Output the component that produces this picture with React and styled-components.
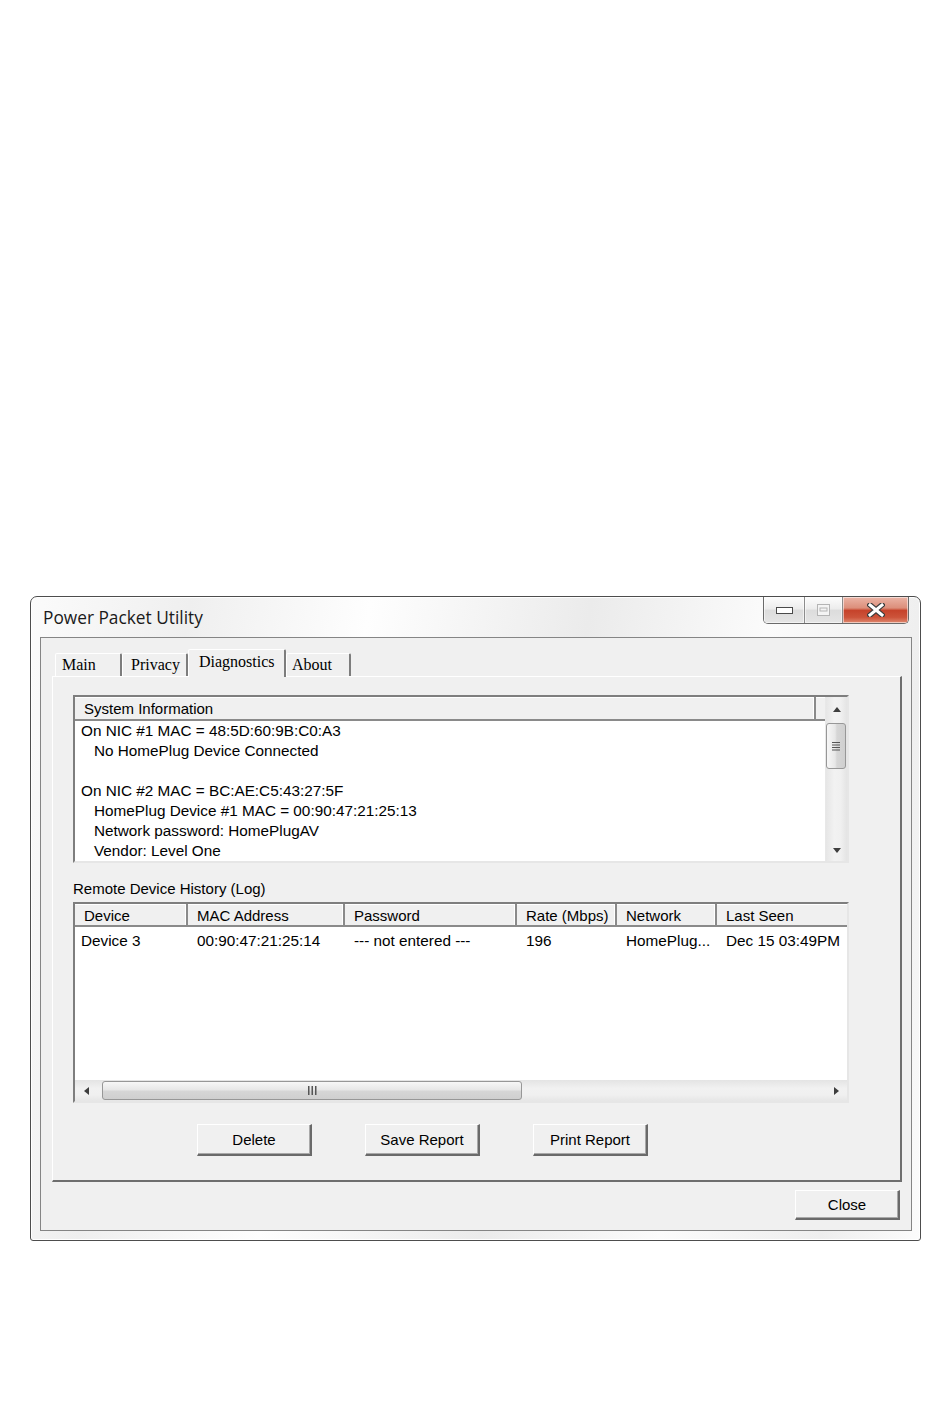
import React from 'react'
import styled, { createGlobalStyle } from 'styled-components'

const GlobalStyle = createGlobalStyle`
  html, body {
    margin: 0;
    padding: 0;
    background: #ffffff;
  }
  body {
    font-family: "Liberation Sans", Arial, sans-serif;
    color: #000;
  }
`

const Page = styled.div`
  width: 950px;
  height: 1419px;
  box-sizing: border-box;
  padding: 596px 0 0 30px;
`

const Window = styled.div`
  width: 891px;
  height: 645px;
  box-sizing: border-box;
  display: flex;
  flex-direction: column;
  padding: 0 8px 9px 9px;
  border: 1px solid #4d4d4d;
  border-radius: 7px 7px 3px 3px;
  background: linear-gradient(100deg, #fbfbfb 0%, #efefef 16%, #fefefe 34%, #ebebeb 56%, #fbfbfb 74%, #eeeeee 90%, #fcfcfc 100%);
  box-shadow: inset 0 0 0 1px rgba(255, 255, 255, 0.95);
`

const TitleBar = styled.div`
  height: 40px;
  display: flex;
  align-items: flex-start;
`

const Title = styled.div`
  margin: 11px 0 0 3px;
  font-family: "Open Sans", "Liberation Sans", sans-serif;
  font-size: 17.3px;
  line-height: 20px;
  color: #1a1a1a;
`

const Caption = styled.div`
  margin-left: auto;
  margin-right: 3px;
  height: 27px;
  display: flex;
  border: 1px solid #6a6a6a;
  border-top: none;
  border-radius: 0 0 5px 5px;
  overflow: hidden;
  box-sizing: border-box;
`

const CaptionButton = styled.div`
  width: ${p => p.$w}px;
  display: flex;
  align-items: center;
  justify-content: center;
  box-sizing: border-box;
  border-left: ${p => (p.$first ? 'none' : '1px solid #8c8c8c')};
  background: ${p =>
    p.$close
      ? 'linear-gradient(#ebb4a6 0%, #dc8f7b 42%, #c6432b 52%, #cc533a 78%, #e08a70 100%)'
      : 'linear-gradient(#fdfdfd 0%, #ececec 45%, #dcdcdc 52%, #e5e5e5 100%)'};
  box-shadow: inset 0 0 0 1px rgba(255, 255, 255, 0.55);
`

const Client = styled.div`
  flex: 1;
  display: flex;
  flex-direction: column;
  box-sizing: border-box;
  padding: 11px 9px 9px 11px;
  background: #f0f0f0;
  border: 1px solid #858585;
`

const TabRow = styled.div`
  height: 27px;
  display: flex;
  align-items: flex-end;
  padding-left: 3px;
  position: relative;
  z-index: 1;
`

const Tab = styled.div`
  width: ${p => p.$w}px;
  height: ${p => (p.$active ? 28 : 23)}px;
  margin-bottom: ${p => (p.$active ? -1 : 0)}px;
  box-sizing: border-box;
  padding: ${p => (p.$active ? 1 : 0)}px 0 0 ${p => p.$pad}px;
  border-style: solid;
  border-width: 1px 2px 0 1px;
  border-color: #ffffff #7d7d7d transparent #ffffff;
  border-radius: 2px 2px 0 0;
  background: #f0f0f0;
  font-family: "Liberation Serif", "Times New Roman", serif;
  font-size: 16px;
  line-height: 22px;
  color: #000;
`

const Panel = styled.div`
  height: 506px;
  box-sizing: border-box;
  padding: 18px 0 0 20px;
  border-style: solid;
  border-width: 1px 2px 2px 1px;
  border-color: #ffffff #6e6e6e #6e6e6e #ffffff;
  background: #f0f0f0;
`

const SunkenBox = styled.div`
  width: 776px;
  height: ${p => p.$h}px;
  box-sizing: border-box;
  border-style: solid;
  border-width: 2px;
  border-color: #7e7e7e #e6e6e6 #e6e6e6 #7e7e7e;
  background: #ffffff;
  display: flex;
  flex-direction: ${p => p.$dir || 'row'};
`

const ListArea = styled.div`
  flex: 1;
  display: flex;
  flex-direction: column;
`

const HeaderRow = styled.div`
  height: ${p => p.$h}px;
  display: flex;
  box-sizing: border-box;
  background: #f0f0f0;
  border-bottom: 2px solid #8a8a8a;
  box-shadow: inset 0 1px 0 #ffffff;
`

const HeaderCell = styled.div`
  width: ${p => (p.$w ? `${p.$w}px` : 'auto')};
  flex: ${p => (p.$w ? 'none' : 1)};
  box-sizing: border-box;
  padding: 1px 0 0 9px;
  font-size: 15px;
  line-height: 21px;
  white-space: nowrap;
  overflow: hidden;
  border-right: ${p => (p.$last ? 'none' : '2px solid #8a8a8a')};
  box-shadow: ${p => (p.$last ? 'none' : 'inset -1px 0 0 #ffffff')};
`

const InfoLines = styled.div`
  flex: 1;
  padding-left: 6px;
  background: #ffffff;
`

const InfoLine = styled.div`
  height: 20px;
  line-height: 20px;
  font-size: 15.3px;
  padding-left: ${p => (p.$indent ? 13 : 0)}px;
  white-space: nowrap;
`

const VScroll = styled.div`
  width: 22px;
  display: flex;
  flex-direction: column;
  background: linear-gradient(90deg, #e6e6e6, #f2f2f2 40%, #f0f0f0 70%, #e4e4e4);
  border-left: 1px solid #e8e8e8;
  box-sizing: border-box;
`

const ArrowCell = styled.div`
  width: ${p => p.$w || 'auto'};
  height: ${p => p.$h || 'auto'};
  display: flex;
  align-items: center;
  justify-content: center;
  flex: none;
`

const VThumb = styled.div`
  height: 46px;
  margin: 2px 1px 0 0;
  box-sizing: border-box;
  border: 1px solid #979797;
  border-radius: 3px;
  background: linear-gradient(90deg, #f7f7f7 0%, #e7e7e7 45%, #d6d6d6 55%, #cfcfcf 100%);
  display: flex;
  align-items: center;
  justify-content: center;
`

const Spacer = styled.div`
  flex: 1;
`

const SectionLabel = styled.div`
  margin: 17px 0 4px;
  font-size: 15px;
  line-height: 18px;
`

const LogBody = styled.div`
  flex: 1;
  padding-top: 4px;
  background: #ffffff;
`

const DataRow = styled.div`
  display: flex;
  height: 20px;
  line-height: 20px;
  font-size: 15.3px;
`

const DataCell = styled.div`
  width: ${p => (p.$w ? `${p.$w}px` : 'auto')};
  flex: ${p => (p.$w ? 'none' : 1)};
  box-sizing: border-box;
  padding-left: ${p => p.$pad}px;
  white-space: nowrap;
  overflow: hidden;
`

const HScroll = styled.div`
  height: 21px;
  display: flex;
  align-items: center;
  background: linear-gradient(#e4e4e4, #f1f1f1 40%, #f0f0f0 70%, #e6e6e6);
`

const HThumb = styled.div`
  width: 420px;
  height: 19px;
  margin-left: 5px;
  box-sizing: border-box;
  border: 1px solid #979797;
  border-radius: 3px;
  background: linear-gradient(#f7f7f7 0%, #e7e7e7 45%, #d6d6d6 55%, #cfcfcf 100%);
  display: flex;
  align-items: center;
  justify-content: center;
`

const ButtonRow = styled.div`
  display: flex;
  gap: 53px;
  margin-top: 21px;
  padding-left: 124px;
`

const Button = styled.div`
  width: ${p => p.$w}px;
  height: ${p => p.$h}px;
  box-sizing: border-box;
  display: flex;
  align-items: center;
  justify-content: center;
  border-style: solid;
  border-width: 1px 2px 2px 1px;
  border-color: #ffffff #6a6a6a #6a6a6a #ffffff;
  box-shadow: inset -1px -1px 0 #a9a9a9;
  background: #f0f0f0;
  font-size: 15px;
  color: #000;
`

const Footer = styled.div`
  display: flex;
  justify-content: flex-end;
  margin-top: 8px;
  padding-right: 2px;
`

const UpArrow = () => (
  <svg width="8" height="5" viewBox="0 0 8 5"><path d="M0 5 L4 0 L8 5 Z" fill="#3e3e3e" /></svg>
)
const DownArrow = () => (
  <svg width="8" height="5" viewBox="0 0 8 5"><path d="M0 0 L8 0 L4 5 Z" fill="#3e3e3e" /></svg>
)
const LeftArrow = () => (
  <svg width="5" height="8" viewBox="0 0 5 8"><path d="M5 0 L5 8 L0 4 Z" fill="#3e3e3e" /></svg>
)
const RightArrow = () => (
  <svg width="5" height="8" viewBox="0 0 5 8"><path d="M0 0 L5 4 L0 8 Z" fill="#3e3e3e" /></svg>
)

const GripV = () => (
  <svg width="10" height="9" viewBox="0 0 10 9">
    <rect x="1" y="0" width="8" height="1" fill="#555" />
    <rect x="1" y="2.5" width="8" height="1" fill="#555" />
    <rect x="1" y="5" width="8" height="1" fill="#555" />
    <rect x="1" y="7.5" width="8" height="1" fill="#555" />
  </svg>
)
const GripH = () => (
  <svg width="9" height="9" viewBox="0 0 9 9">
    <rect x="0" y="0" width="1.5" height="9" fill="#555" />
    <rect x="3.5" y="0" width="1.5" height="9" fill="#555" />
    <rect x="7" y="0" width="1.5" height="9" fill="#555" />
  </svg>
)

const infoLines = [
  { text: 'On NIC #1 MAC = 48:5D:60:9B:C0:A3' },
  { text: 'No HomePlug Device Connected', indent: true },
  { text: '' },
  { text: 'On NIC #2 MAC = BC:AE:C5:43:27:5F' },
  { text: 'HomePlug Device #1 MAC = 00:90:47:21:25:13', indent: true },
  { text: 'Network password: HomePlugAV', indent: true },
  { text: 'Vendor: Level One', indent: true },
]

const columns = [
  { name: 'Device', w: 113 },
  { name: 'MAC Address', w: 157 },
  { name: 'Password', w: 172 },
  { name: 'Rate (Mbps)', w: 100 },
  { name: 'Network', w: 100 },
  { name: 'Last Seen' },
]

const rows = [
  ['Device 3', '00:90:47:21:25:14', '--- not entered ---', '196', 'HomePlug...', 'Dec 15 03:49PM'],
]

const tabs = [
  { name: 'Main', w: 67, pad: 6 },
  { name: 'Privacy', w: 66, pad: 8 },
  { name: 'Diagnostics', w: 98, pad: 10, active: true },
  { name: 'About', w: 65, pad: 5 },
]

function App() {
  return (
    <Page>
      <GlobalStyle />
      <Window>
        <TitleBar>
          <Title>Power Packet Utility</Title>
          <Caption>
            <CaptionButton $w={40} $first>
              <svg width="17" height="7" viewBox="0 0 17 7">
                <rect x="0.5" y="0.5" width="16" height="6" fill="#fff" stroke="#4a4a4a" />
              </svg>
            </CaptionButton>
            <CaptionButton $w={38}>
              <svg width="13" height="12" viewBox="0 0 13 12">
                <rect x="0.5" y="0.5" width="12" height="11" fill="#f4f4f4" stroke="#b4b4b4" />
                <rect x="3" y="4" width="7" height="3" fill="none" stroke="#b4b4b4" />
              </svg>
            </CaptionButton>
            <CaptionButton $w={66} $close>
              <svg width="18" height="14" viewBox="0 0 18 14">
                <path d="M3 2 L15 12 M15 2 L3 12" stroke="#3c3c3c" strokeWidth="5.5" strokeLinecap="square" />
                <path d="M3 2 L15 12 M15 2 L3 12" stroke="#ffffff" strokeWidth="3" strokeLinecap="square" />
              </svg>
            </CaptionButton>
          </Caption>
        </TitleBar>

        <Client>
          <TabRow>
            {tabs.map(t => (
              <Tab key={t.name} $w={t.w} $pad={t.pad} $active={t.active}>{t.name}</Tab>
            ))}
          </TabRow>

          <Panel>
            <SunkenBox $h={168}>
              <ListArea>
                <HeaderRow $h={24}>
                  <HeaderCell>System Information</HeaderCell>
                  <HeaderCell $w={8} $last />
                </HeaderRow>
                <InfoLines>
                  {infoLines.map((l, i) => (
                    <InfoLine key={i} $indent={l.indent}>{l.text}</InfoLine>
                  ))}
                </InfoLines>
              </ListArea>
              <VScroll>
                <ArrowCell $h="24px"><UpArrow /></ArrowCell>
                <VThumb><GripV /></VThumb>
                <Spacer />
                <ArrowCell $h="22px"><DownArrow /></ArrowCell>
              </VScroll>
            </SunkenBox>

            <SectionLabel>Remote Device History (Log)</SectionLabel>

            <SunkenBox $h={201} $dir="column">
              <HeaderRow $h={23}>
                {columns.map((c, i) => (
                  <HeaderCell key={c.name} $w={c.w} $last={i === columns.length - 1}>{c.name}</HeaderCell>
                ))}
              </HeaderRow>
              <LogBody>
                {rows.map((r, ri) => (
                  <DataRow key={ri}>
                    {r.map((v, i) => (
                      <DataCell key={i} $w={columns[i].w} $pad={i === 0 ? 6 : 9}>{v}</DataCell>
                    ))}
                  </DataRow>
                ))}
              </LogBody>
              <HScroll>
                <ArrowCell $w="22px"><LeftArrow /></ArrowCell>
                <HThumb><GripH /></HThumb>
                <Spacer />
                <ArrowCell $w="22px"><RightArrow /></ArrowCell>
              </HScroll>
            </SunkenBox>

            <ButtonRow>
              <Button $w={115} $h={32}>Delete</Button>
              <Button $w={115} $h={32}>Save Report</Button>
              <Button $w={115} $h={32}>Print Report</Button>
            </ButtonRow>
          </Panel>

          <Footer>
            <Button $w={105} $h={30}>Close</Button>
          </Footer>
        </Client>
      </Window>
    </Page>
  )
}

export default App
